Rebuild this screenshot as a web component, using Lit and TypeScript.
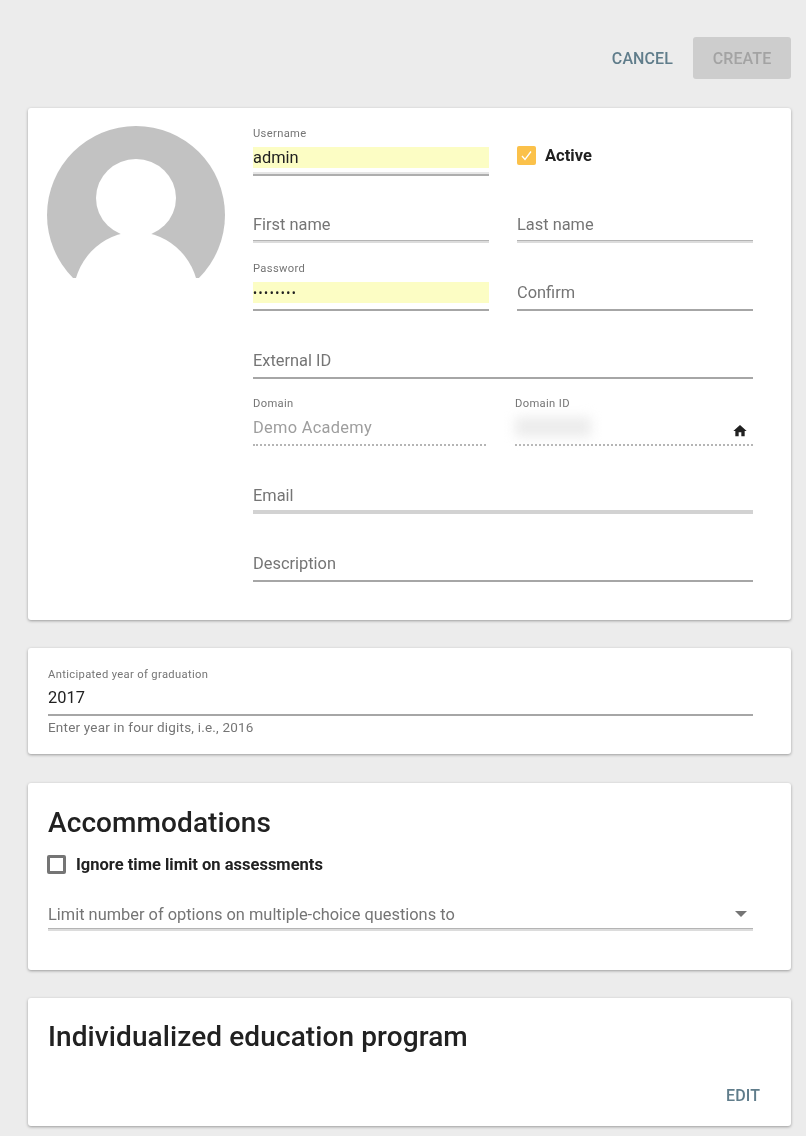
import { LitElement, html, css, nothing } from "lit";
import { customElement } from "lit/decorators.js";

@customElement("app-root")
export class AppRoot extends LitElement {
  static styles = css`
    :host { display: block; height: 1136px; overflow: hidden; background: #ececec; font-family: Roboto, "Liberation Sans", sans-serif; color: #212121; }
    .page { height: 1136px; box-sizing: border-box; padding: 37px 15px 0 28px; display: flex; flex-direction: column; filter: blur(0.7px); }
    .actions { display: flex; justify-content: flex-end; align-items: center; height: 42px; margin-bottom: 29px; }
    .btn { font-size: 16px; font-weight: 500; color: #607d8b; letter-spacing: 0.1px; }
    .cancel { margin-right: 20px; }
    .create { width: 98px; height: 42px; border-radius: 3px; background: #cdcdcd; color: #a3a3a3; display: flex; align-items: center; justify-content: center; }
    .card { background: #fff; border-radius: 3px; box-shadow: 0 1px 3px rgba(0,0,0,.35); box-sizing: border-box; }
    .c1 { height: 512px; display: flex; padding-left: 19px; margin-bottom: 28px; }
    .avatar { width: 178px; height: 178px; margin: 18px 28px 0 0; flex: none; display: block; }
    .grid { width: 500px; display: grid; grid-template-columns: 236px 236px; column-gap: 28px; grid-auto-rows: 67.7px; }
    .span { grid-column: 1 / 3; }
    .field { display: flex; flex-direction: column; justify-content: flex-end; position: relative; }
    .label { font-size: 11.2px; line-height: 12px; color: #757575; margin-bottom: 7px; letter-spacing: 0.35px; }
    .value { font-size: 16.4px; line-height: 21px; height: 21px; color: #212121; white-space: nowrap; }
    .placeholder { color: #757575; }
    .auto { background: #fcfdc4; }
    .pw { font-size: 12px; letter-spacing: 1.5px; line-height: 23px; }
    .line { height: 2px; margin-top: 6px; background: #a6a6a6; }
    .line.thick { height: 3px; margin-top: 5px; background: linear-gradient(#b4b4b4 0 50%, #dcdcdc 50% 100%); }
    .line.rev { height: 4px; margin-top: 4px; background: linear-gradient(#e6e6e6 0 40%, #aeaeae 40% 100%); }
    .line.solid { height: 4px; margin-top: 4px; background: #d2d2d2; }
    .line.dots { height: 0; border-top: 2px dotted #b5b5b5; background: none; }
    .muted { color: #9e9e9e; letter-spacing: 0.3px; }
    .short { width: 233px; }
    .shift { margin-left: -2px; }
    .redact { width: 76px; height: 20px; background: #ececec; filter: blur(6px); }
    .home { position: absolute; right: 5px; bottom: 7px; width: 16px; height: 16px; display: block; }
    .check { display: flex; align-items: center; gap: 9px; font-size: 16.5px; font-weight: 700; color: #212121; white-space: nowrap; }
    .active { align-self: start; padding-top: 38px; }
    .box { width: 19px; height: 19px; box-sizing: border-box; border-radius: 2px; flex: none; display: block; }
    .box.on { background: #fbc14a; }
    .box.off { border: 3px solid #757575; margin-left: -1px; margin-right: 1px; }
    .c2 { height: 106px; padding: 21px 38px 0 20px; margin-bottom: 29px; }
    .c2 .label { margin-bottom: 6px; }
    .help { font-size: 13.5px; line-height: 16px; color: #757575; margin-top: 3px; letter-spacing: 0.2px; }
    .c3 { height: 187px; padding: 22px 38px 0 20px; margin-bottom: 28px; }
    h2 { margin: 0; font-size: 28px; line-height: 36px; font-weight: 500; color: #212121; letter-spacing: 0.1px; }
    .c3 .check { margin-top: 14px; height: 19px; }
    .select { margin-top: 30px; position: relative; }
    .select .value { color: #757575; }
    .select .line.thick { margin-top: 3px; }
    .caret { position: absolute; right: 6px; top: 7px; width: 0; height: 0; border-left: 6px solid transparent; border-right: 6px solid transparent; border-top: 6px solid #757575; }
    .c4 { height: 128px; padding: 21px 20px 0 20px; display: flex; flex-direction: column; }
    .edit { align-self: flex-end; margin: 31px 11px 0 0; }
  `;

  field(label: string, value: string, o: { cls?: string; line?: string; valCls?: string; extra?: unknown } = {}) {
    return html`<div class="field ${o.cls ?? ""}">
      ${label ? html`<div class="label">${label}</div>` : nothing}
      <div class="value ${o.valCls ?? ""}">${value}</div>
      <div class="line ${o.line ?? ""}"></div>
      ${o.extra ?? nothing}
    </div>`;
  }

  render() {
    return html`<div class="page">
      <div class="actions">
        <span class="btn cancel">CANCEL</span>
        <span class="btn create">CREATE</span>
      </div>

      <section class="card c1">
        <svg class="avatar" viewBox="0 0 178 178">
          <defs><clipPath id="c"><rect x="0" y="0" width="178" height="178"/></clipPath></defs>
          <circle cx="89" cy="89" r="89" fill="#c2c2c2"/>
          <g clip-path="url(#c)">
            <ellipse cx="89" cy="72" rx="40" ry="39" fill="#fff"/>
            <ellipse cx="89" cy="172" rx="63" ry="66" fill="#fff"/>
            <rect x="14" y="152" width="150" height="26" fill="#fff"/>
          </g>
        </svg>
        <div class="grid">
          ${this.field("Username", "admin", { valCls: "auto", line: "rev" })}
          <div class="check active">
            <svg class="box on" viewBox="0 0 19 19"><path d="M5 10l3 3.5 6-8" fill="none" stroke="#fff" stroke-width="1.3"/></svg>
            <span>Active</span>
          </div>
          ${this.field("", "First name", { valCls: "placeholder", line: "thick" })}
          ${this.field("", "Last name", { valCls: "placeholder", line: "thick" })}
          ${this.field("Password", "••••••••", { valCls: "auto pw" })}
          ${this.field("", "Confirm", { valCls: "placeholder" })}
          ${this.field("", "External ID", { cls: "span", valCls: "placeholder" })}
          ${this.field("Domain", "Demo Academy", { cls: "short", valCls: "muted", line: "dots" })}
          <div class="field shift">
            <div class="label">Domain ID</div>
            <div class="value"><div class="redact"></div></div>
            <div class="line dots"></div>
            <svg class="home" viewBox="0 0 24 24"><path d="M10 20v-6h4v6h5v-8h3L12 3 2 12h3v8z" fill="#212121"/></svg>
          </div>
          ${this.field("", "Email", { cls: "span", valCls: "placeholder", line: "solid" })}
          ${this.field("", "Description", { cls: "span", valCls: "placeholder" })}
        </div>
      </section>

      <section class="card c2">
        <div class="label">Anticipated year of graduation</div>
        <div class="value">2017</div>
        <div class="line"></div>
        <div class="help">Enter year in four digits, i.e., 2016</div>
      </section>

      <section class="card c3">
        <h2>Accommodations</h2>
        <div class="check"><span class="box off"></span><span>Ignore time limit on assessments</span></div>
        <div class="select">
          <div class="value">Limit number of options on multiple-choice questions to</div>
          <div class="line thick"></div>
          <div class="caret"></div>
        </div>
      </section>

      <section class="card c4">
        <h2>Individualized education program</h2>
        <span class="btn edit">EDIT</span>
      </section>
    </div>`;
  }
}
